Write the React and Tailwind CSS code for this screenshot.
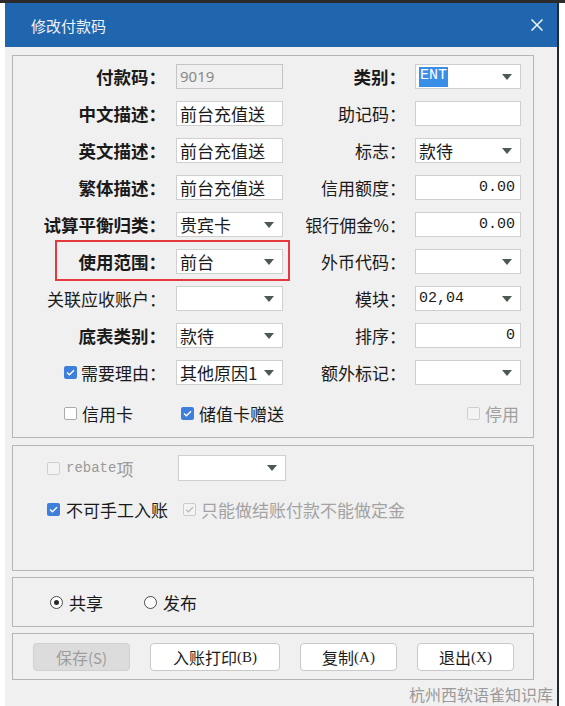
import React from 'react';

const cjk = "font-['Noto_Sans_CJK_SC','Noto_Sans',sans-serif]";
const mono = "font-['Liberation_Mono',monospace]";
const serif = "font-['Liberation_Serif','Noto_Sans_CJK_SC',serif]";

function Arrow() {
  return (
    <svg width="10" height="6" viewBox="0 0 10 6" className="shrink-0">
      <path d="M0 0 H10 L5 6 Z" fill="#4d5a52" />
    </svg>
  );
}

function Box({ children, disabled, select, right, className = '' }) {
  return (
    <div
      className={`h-[25px] flex items-center border ${
        disabled ? 'bg-[#f0f0f0] border-[#c4c4c4]' : 'bg-white border-[#cfcfcf]'
      } ${className}`}
    >
      <div className={`flex-1 min-w-0 flex items-center pl-[3px] pr-[5px] ${right ? 'justify-end' : ''}`}>
        {children}
      </div>
      {select && (
        <div className="pr-[8px] flex items-center">
          <Arrow />
        </div>
      )}
    </div>
  );
}

function Check({ checked, disabled }) {
  if (checked && !disabled) {
    return (
      <span className="w-[13px] h-[13px] rounded-[2px] bg-[#3f7fdc] flex items-center justify-center shrink-0">
        <svg width="9" height="7" viewBox="0 0 9 7">
          <path d="M1 3.6 L3.4 5.8 L8 1.2" stroke="white" strokeWidth="1.4" fill="none" />
        </svg>
      </span>
    );
  }
  if (checked && disabled) {
    return (
      <span className="w-[13px] h-[13px] rounded-[2px] border border-[#cccccc] bg-[#f4f4f4] flex items-center justify-center shrink-0">
        <svg width="9" height="7" viewBox="0 0 9 7">
          <path d="M1 3.6 L3.4 5.8 L8 1.2" stroke="#b5b5b5" strokeWidth="1.2" fill="none" />
        </svg>
      </span>
    );
  }
  return (
    <span
      className={`w-[13px] h-[13px] rounded-[2px] border shrink-0 ${
        disabled ? 'border-[#cfcfcf] bg-[#f3f3f3]' : 'border-[#a9a9a9] bg-white'
      }`}
    />
  );
}

function Radio({ on }) {
  return (
    <span className="w-[13px] h-[13px] rounded-full border border-[#4a4a4a] bg-white flex items-center justify-center shrink-0">
      {on && <span className="w-[5px] h-[5px] rounded-full bg-[#2a2a2a]" />}
    </span>
  );
}

function Label({ children, bold }) {
  return (
    <span
      className={`leading-none text-[#1a1a1a] whitespace-nowrap ${
        bold ? 'font-bold text-[17.5px]' : 'text-[17px]'
      }`}
    >
      {children}
    </span>
  );
}

function Row({ l, lf, r, rf }) {
  return (
    <div className="h-[37px] flex items-center">
      <div className="w-[153px] flex justify-end items-center">{l}</div>
      <div className="w-[107px] ml-[10px]">{lf}</div>
      <div className="w-[123px] flex justify-end items-center">{r}</div>
      <div className="w-[106px] ml-[9px]">{rf}</div>
    </div>
  );
}

const txt = 'text-[17px] leading-none text-[#1a1a1a] whitespace-nowrap';
const num = `${mono} text-[15px] leading-none text-[#1a1a1a]`;

function Btn({ label, key2, w, disabled }) {
  return (
    <div
      className={`h-[28px] rounded-[4px] border flex items-center justify-center ${w} ${
        disabled ? 'bg-[#dcdcdc] border-[#d0d0d0] text-[#9c9c9c]' : 'bg-white border-[#c9c9c9] text-[#1a1a1a]'
      }`}
    >
      <span className="text-[16px] leading-none">{label}</span>
      <span className={`${disabled ? '' : serif} text-[15px] leading-none`}>{key2}</span>
    </div>
  );
}

export default function App() {
  return (
    <div className={`w-[565px] h-[706px] bg-white overflow-hidden flex flex-col ${cjk}`}>
      <div className="h-[3px] bg-[#2b2b2b] shrink-0" />
      <div className="flex flex-1 min-h-0">
        <div className="w-[5px]" />
        <div className="w-[552px] flex flex-col bg-[#f0f0f0]">
          {/* Title bar */}
          <div className="h-[44px] bg-[#2066ae] flex items-center justify-between pl-[26px] pr-[14px] shrink-0">
            <span className="text-[15px] leading-none text-[#eef3fa]">修改付款码</span>
            <svg width="12" height="12" viewBox="0 0 12 12">
              <path d="M0.5 0.5 L11.5 11.5 M11.5 0.5 L0.5 11.5" stroke="#f2f6fb" strokeWidth="1.5" />
            </svg>
          </div>

          <div className="pl-[7px] pt-[8px] flex flex-col">
            {/* Main group */}
            <div className="relative w-[522px] border border-[#b5b5b5] pt-[2px] pb-[2px]">
              <Row
                l={<Label bold>付款码：</Label>}
                lf={
                  <Box disabled>
                    <span className="font-['Noto_Sans',sans-serif] text-[15px] leading-none text-[#8a8a8a]">9019</span>
                  </Box>
                }
                r={<Label bold>类别：</Label>}
                rf={
                  <Box select>
                    <span className={`${mono} text-[15px] h-[20px] flex items-center bg-[#3a8ee6] text-white px-[1px]`}>ENT</span>
                  </Box>
                }
              />
              <Row
                l={<Label bold>中文描述：</Label>}
                lf={<Box><span className={txt}>前台充值送</span></Box>}
                r={<Label>助记码：</Label>}
                rf={<Box />}
              />
              <Row
                l={<Label bold>英文描述：</Label>}
                lf={<Box><span className={txt}>前台充值送</span></Box>}
                r={<Label>标志：</Label>}
                rf={<Box select><span className={txt}>款待</span></Box>}
              />
              <Row
                l={<Label bold>繁体描述：</Label>}
                lf={<Box><span className={txt}>前台充值送</span></Box>}
                r={<Label>信用额度：</Label>}
                rf={<Box right><span className={num}>0.00</span></Box>}
              />
              <Row
                l={<Label bold>试算平衡归类：</Label>}
                lf={<Box select><span className={txt}>贵宾卡</span></Box>}
                r={<Label>银行佣金%：</Label>}
                rf={<Box right><span className={num}>0.00</span></Box>}
              />
              <Row
                l={<Label bold>使用范围：</Label>}
                lf={<Box select><span className={txt}>前台</span></Box>}
                r={<Label>外币代码：</Label>}
                rf={<Box select />}
              />
              <Row
                l={<Label>关联应收账户：</Label>}
                lf={<Box select />}
                r={<Label>模块：</Label>}
                rf={<Box select><span className={num}>02,04</span></Box>}
              />
              <Row
                l={<Label bold>底表类别：</Label>}
                lf={<Box select><span className={txt}>款待</span></Box>}
                r={<Label>排序：</Label>}
                rf={<Box right><span className={num}>0</span></Box>}
              />
              <Row
                l={
                  <span className="flex items-center gap-[4px]">
                    <Check checked />
                    <Label>需要理由：</Label>
                  </span>
                }
                lf={
                  <Box select>
                    <span className={txt}>其他原因1</span>
                  </Box>
                }
                r={<Label>额外标记：</Label>}
                rf={<Box select />}
              />
              <div className="h-[44px] flex items-center">
                <div className="pl-[51px] w-[163px] flex items-center gap-[5px]">
                  <Check />
                  <span className={txt}>信用卡</span>
                </div>
                <div className="pl-[5px] flex items-center gap-[5px]">
                  <Check checked />
                  <span className={txt}>储值卡赠送</span>
                </div>
                <div className="ml-auto pr-[14px] flex items-center gap-[5px]">
                  <Check disabled />
                  <span className="text-[17px] leading-none text-[#a0a0a0]">停用</span>
                </div>
              </div>
              {/* highlight frame */}
              <div className="absolute left-[42px] top-[184px] w-[235px] h-[41px] border-2 border-[#e4393e] pointer-events-none" />
            </div>

            {/* Second group */}
            <div className="mt-[7px] w-[522px] h-[126px] border border-[#b5b5b5] pt-[9px] pl-[34px]">
              <div className="flex items-center h-[26px]">
                <div className="w-[131px] flex items-center gap-[6px]">
                  <Check disabled />
                  <span className="flex items-center">
                    <span className={`${mono} text-[14px] leading-none text-[#9a9a9a]`}>rebate</span>
                    <span className="text-[17px] leading-none text-[#9a9a9a]">项</span>
                  </span>
                </div>
                <Box select className="w-[108px] !h-[26px]" />
              </div>
              <div className="flex items-center h-[20px] mt-[18px]">
                <Check checked />
                <span className={`${txt} ml-[6px]`}>不可手工入账</span>
                <span className="ml-[15px]">
                  <Check checked disabled />
                </span>
                <span className="ml-[5px] text-[17px] leading-none text-[#a3a3a3]">只能做结账付款不能做定金</span>
              </div>
            </div>

            {/* Share / publish */}
            <div className="mt-[6px] w-[522px] h-[50px] border border-[#b5b5b5] flex items-center pl-[37px]">
              <Radio on />
              <span className={`${txt} ml-[6px]`}>共享</span>
              <span className="ml-[41px]">
                <Radio />
              </span>
              <span className={`${txt} ml-[6px]`}>发布</span>
            </div>

            {/* Buttons */}
            <div className="mt-[6px] w-[522px] h-[47px] border border-[#b5b5b5] flex items-start pt-[9px] pl-[20px] gap-[20px]">
              <Btn label="保存" key2="(S)" w="w-[97px]" disabled />
              <Btn label="入账打印" key2="(B)" w="w-[130px]" />
              <Btn label="复制" key2="(A)" w="w-[97px]" />
              <Btn label="退出" key2="(X)" w="w-[97px]" />
            </div>

            <div className="flex justify-end pr-[4px] pt-[4px]">
              <span className="text-[16px] leading-[20px] text-[#9a9a9a]">杭州西软语雀知识库</span>
            </div>
          </div>
        </div>
        <div className="w-[2px] bg-[#1e2a36]" />
      </div>
    </div>
  );
}
